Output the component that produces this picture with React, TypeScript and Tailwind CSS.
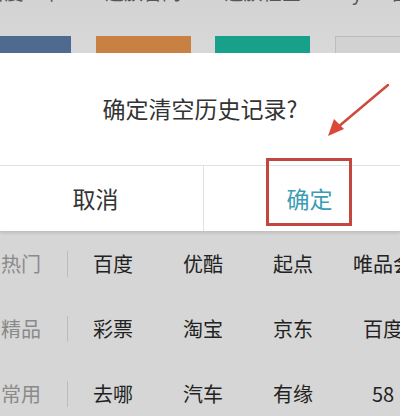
const tiles = [
  { label: "百度一下", color: "bg-[#4f6a8f]" },
  { label: "魅族官网", color: "bg-[#c98043]" },
  { label: "魅族社区", color: "bg-[#17a08a]" },
  { label: "Flyme官网", color: "bg-[#d2d2d2] border border-[#bdbdbd]" },
];

const rows = [
  { label: "热门", items: ["百度", "优酷", "起点", "唯品会"] },
  { label: "精品", items: ["彩票", "淘宝", "京东", "百度"] },
  { label: "常用", items: ["去哪", "汽车", "有缘", "58"] },
];

export default function App() {
  return (
    <div className="relative w-[400px] h-[416px] overflow-hidden bg-[#d6d6d6] font-['Noto_Sans_CJK_SC','Noto_Sans',sans-serif]">
      {/* Shortcut tiles behind the dialog */}
      <div className="h-[53px] bg-gradient-to-b from-[#d3d3d3] to-[#d8d8d8] overflow-hidden">
        <div className="flex gap-[24.5px] -ml-[24px] -mt-[22px]">
          {tiles.map((t) => (
            <div key={t.label} className="w-[95px] shrink-0 flex flex-col items-center">
              <div className="h-[28px] leading-[28px] text-[19px] text-[#555] whitespace-nowrap">{t.label}</div>
              <div className={`mt-[30px] h-[20px] w-[95px] ${t.color}`} />
            </div>
          ))}
        </div>
      </div>

      {/* Dialog */}
      <div className="bg-white h-[178px] flex flex-col shadow-[0_2px_3px_rgba(0,0,0,0.12)]">
        <div className="h-[113px] flex items-center justify-center border-b border-[#e2e2e2] text-[23px] text-[#333] pb-[2px]">
          确定清空历史记录?
        </div>
        <div className="flex-1 flex">
          <div className="w-[204px] flex items-center justify-center pr-[12px] text-[23px] text-[#333] border-r border-[#e2e2e2]">
            取消
          </div>
          <div className="flex-1 flex items-center justify-center pl-[15px] text-[23px] text-[#3b9cb3]">
            确定
          </div>
        </div>
      </div>

      {/* Category rows */}
      <div className="flex flex-col">
        {rows.map((r) => (
          <div key={r.label} className="h-[65px] flex items-center">
            <div className="w-[68px] shrink-0 flex items-center">
              <span className="pl-[1px] text-[20px] text-[#8a8a8a] whitespace-nowrap">{r.label}</span>
              <div className="ml-auto h-[26px] w-px bg-[#bcbcbc]" />
            </div>
            {r.items.map((it, i) => (
              <div key={i} className="w-[90px] shrink-0 text-center text-[20px] text-[#222] whitespace-nowrap">
                {it}
              </div>
            ))}
          </div>
        ))}
      </div>

      {/* Red highlight box */}
      <div className="absolute left-[266px] top-[158px] w-[86px] h-[68px] border-[3px] border-[#c4473f]" />

      {/* Red arrow */}
      <svg className="absolute left-0 top-0" width="400" height="416" viewBox="0 0 400 416">
        <line x1="388" y1="85" x2="338" y2="127" stroke="#cf4a3c" strokeWidth="2.5" strokeLinecap="round" />
        <polygon points="328,136 334,119 344,129" fill="#d9483a" />
      </svg>
    </div>
  );
}
